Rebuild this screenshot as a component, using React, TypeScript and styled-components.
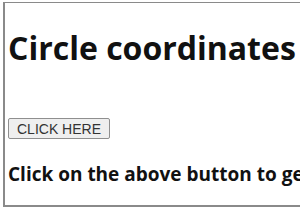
import React from "react";
import styled, { createGlobalStyle } from "styled-components";

const GlobalStyle = createGlobalStyle`
  html, body {
    margin: 0;
    padding: 0;
    background: #ffffff;
    overflow: hidden;
  }
`;

const Frame = styled.div`
  margin: 2px 0 0 3px;
  width: 320px;
  height: 205px;
  box-sizing: border-box;
  border: 1px solid #8a8a8a;
  border-width: 1px 0 2px 2px;
  padding: 0 0 0 3px;
  overflow: hidden;
  font-family: "Open Sans", "Noto Sans", sans-serif;
  color: #111;
`;

const Heading = styled.h1`
  margin: 25px 0 0;
  font-size: 32px;
  font-weight: 700;
  line-height: 40px;
  white-space: nowrap;
`;

const ActionButton = styled.button`
  display: block;
  margin: 50px 0 0;
  height: 21px;
  padding: 0 8px;
  font-family: "Liberation Sans", Arial, sans-serif;
  font-size: 14px;
  color: #333;
  background: #efefef;
  border: 1px solid #8f8f8f;
  border-radius: 2px;
`;

const Hint = styled.p`
  margin: 23px 0 0;
  font-size: 19px;
  font-weight: 700;
  line-height: 24px;
  white-space: nowrap;
`;

export default function App() {
  return (
    <>
      <GlobalStyle />
      <Frame>
        <Heading>Circle coordinates</Heading>
        <ActionButton>CLICK HERE</ActionButton>
        <Hint>Click on the above button to get the coordinates</Hint>
      </Frame>
    </>
  );
}
